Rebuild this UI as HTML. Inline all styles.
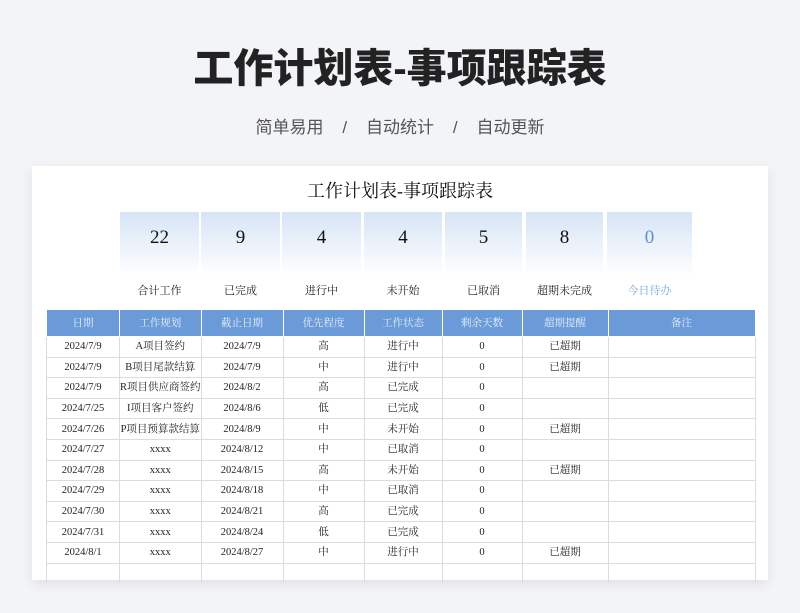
<!DOCTYPE html>
<html><head><meta charset="utf-8"><style>
body{margin:0;width:800px;height:613px;background:#f3f4f7;font-family:"Liberation Sans","Noto Sans CJK SC",sans-serif;position:relative;overflow:hidden}
.t{position:absolute;left:0;width:800px;text-align:center;top:36px;font-size:40px;font-weight:900;color:#222;letter-spacing:0}
.s{position:absolute;left:0;width:800px;text-align:center;top:113px;font-size:17px;color:#555}
.card{position:absolute;left:32px;top:166px;width:736px;height:414px;background:#fff;box-shadow:0 4px 12px rgba(0,0,0,.08)}
.ct{position:absolute;left:0;width:800px;top:177px;text-align:center;font-family:"Liberation Serif","Noto Serif CJK SC",serif;font-size:18px;color:#111}
.box{position:absolute;top:212px;height:64px;background:linear-gradient(#d6e4f6,#fff);text-align:center;font-family:"Liberation Serif",serif;font-size:19px;line-height:52px;color:#111}
.lb{position:absolute;top:282px;text-align:center;font-family:"Liberation Serif","Noto Serif CJK SC",serif;font-size:11px;color:#222}
table{position:absolute;left:46px;top:309px;border-collapse:collapse;font-family:"Liberation Serif","Noto Serif CJK SC",serif;font-size:10.5px;color:#222;table-layout:fixed}
td,th{border:1px solid #dcdcdc;text-align:center;padding:0;height:19.6px;line-height:19px;vertical-align:middle;white-space:nowrap;overflow:hidden}
th{background:#6a9bd8;color:#e8f0fb;font-weight:normal;height:26px;border-color:#fff}
</style></head><body>
<div class="t">工作计划表-事项跟踪表</div>
<div class="s">简单易用 &nbsp; &nbsp;/ &nbsp; &nbsp;自动统计 &nbsp; &nbsp;/ &nbsp; &nbsp;自动更新</div>
<div class="card"></div>
<div class="ct">工作计划表-事项跟踪表</div>
<div class="box" style="left:120px;width:79px">22</div>
<div class="box" style="left:201px;width:79px">9</div>
<div class="box" style="left:282px;width:79px">4</div>
<div class="box" style="left:364px;width:78px">4</div>
<div class="box" style="left:445px;width:77px">5</div>
<div class="box" style="left:526px;width:77px">8</div>
<div class="box" style="left:607px;width:85px;color:#5b8fd0">0</div>
<div class="lb" style="left:120px;width:79px">合计工作</div>
<div class="lb" style="left:201px;width:79px">已完成</div>
<div class="lb" style="left:282px;width:79px">进行中</div>
<div class="lb" style="left:364px;width:78px">未开始</div>
<div class="lb" style="left:445px;width:77px">已取消</div>
<div class="lb" style="left:526px;width:77px">超期未完成</div>
<div class="lb" style="left:607px;width:85px;color:#7aa6dc">今日待办</div>
<table>
<colgroup><col style="width:73px"><col style="width:81px"><col style="width:82px"><col style="width:81px"><col style="width:78px"><col style="width:80px"><col style="width:86px"><col style="width:147px"></colgroup>
<tr><th>日期</th><th>工作规划</th><th>截止日期</th><th>优先程度</th><th>工作状态</th><th>剩余天数</th><th>超期提醒</th><th>备注</th></tr>
<tr><td>2024/7/9</td><td>A项目签约</td><td>2024/7/9</td><td>高</td><td>进行中</td><td>0</td><td>已超期</td><td></td></tr>
<tr><td>2024/7/9</td><td>B项目尾款结算</td><td>2024/7/9</td><td>中</td><td>进行中</td><td>0</td><td>已超期</td><td></td></tr>
<tr><td>2024/7/9</td><td>R项目供应商签约</td><td>2024/8/2</td><td>高</td><td>已完成</td><td>0</td><td></td><td></td></tr>
<tr><td>2024/7/25</td><td>I项目客户签约</td><td>2024/8/6</td><td>低</td><td>已完成</td><td>0</td><td></td><td></td></tr>
<tr><td>2024/7/26</td><td>P项目预算款结算</td><td>2024/8/9</td><td>中</td><td>未开始</td><td>0</td><td>已超期</td><td></td></tr>
<tr><td>2024/7/27</td><td>xxxx</td><td>2024/8/12</td><td>中</td><td>已取消</td><td>0</td><td></td><td></td></tr>
<tr><td>2024/7/28</td><td>xxxx</td><td>2024/8/15</td><td>高</td><td>未开始</td><td>0</td><td>已超期</td><td></td></tr>
<tr><td>2024/7/29</td><td>xxxx</td><td>2024/8/18</td><td>中</td><td>已取消</td><td>0</td><td></td><td></td></tr>
<tr><td>2024/7/30</td><td>xxxx</td><td>2024/8/21</td><td>高</td><td>已完成</td><td>0</td><td></td><td></td></tr>
<tr><td>2024/7/31</td><td>xxxx</td><td>2024/8/24</td><td>低</td><td>已完成</td><td>0</td><td></td><td></td></tr>
<tr><td>2024/8/1</td><td>xxxx</td><td>2024/8/27</td><td>中</td><td>进行中</td><td>0</td><td>已超期</td><td></td></tr>
<tr><td style="height:8px;border-bottom:none"></td><td style="border-bottom:none"></td><td style="border-bottom:none"></td><td style="border-bottom:none"></td><td style="border-bottom:none"></td><td style="border-bottom:none"></td><td style="border-bottom:none"></td><td style="border-bottom:none"></td></tr>
</table>
</body></html>
